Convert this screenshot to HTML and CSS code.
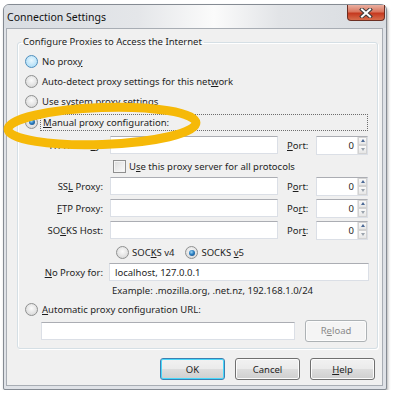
FILE: index.html
```html
<!DOCTYPE html>
<html lang="en">
<head>
  <meta charset="UTF-8" />
  <title>Connection Settings</title>
  <link rel="stylesheet" href="styles.css">
</head>
<body>

  <div class="window">
    <div class="titlebar">
      <span class="title">Connection Settings</span>
      <span class="close">
        <svg width="14" height="10" viewBox="0 0 14 10">
          <path d="M3 1.5 L11 8.5 M11 1.5 L3 8.5" stroke="#3a3a3a" stroke-width="4" stroke-linecap="square"/>
          <path d="M3 1.5 L11 8.5 M11 1.5 L3 8.5" stroke="#fff" stroke-width="2" stroke-linecap="square"/>
        </svg>
      </span>
    </div>

    <div class="client">
      <fieldset class="group">
        <legend>Configure Proxies to Access the Internet</legend>

        <div class="opt row-a"><span class="radio hover"></span><span>No prox<u>y</u></span></div>
        <div class="opt row-a"><span class="radio"></span><span>Auto-detect proxy settings for this net<u>w</u>ork</span></div>
        <div class="opt row-b"><span class="radio"></span><span>Use s<u>y</u>stem proxy settings</span></div>
        <div class="opt row-a"><span class="radio checked"></span><span class="focus"><u>M</u>anual proxy configuration:</span></div>

        <div class="proxy row-http">
          <span class="lbl">HTTP Pro<u>x</u>y:</span>
          <span class="field"></span>
          <span class="plbl"><u>P</u>ort:</span>
          <span class="port"><span class="num">0</span><span class="spin"><i class="up"></i><i class="down"></i></span></span>
        </div>
        <div class="check-row"><span class="check"></span><span>U<u>s</u>e this proxy server for all protocols</span></div>
        <div class="proxy row-ssl">
          <span class="lbl">SS<u>L</u> Proxy:</span>
          <span class="field"></span>
          <span class="plbl">P<u>o</u>rt:</span>
          <span class="port"><span class="num">0</span><span class="spin"><i class="up"></i><i class="down"></i></span></span>
        </div>
        <div class="proxy row-ftp">
          <span class="lbl"><u>F</u>TP Proxy:</span>
          <span class="field"></span>
          <span class="plbl">Po<u>r</u>t:</span>
          <span class="port"><span class="num">0</span><span class="spin"><i class="up"></i><i class="down"></i></span></span>
        </div>
        <div class="proxy row-socks">
          <span class="lbl">SO<u>C</u>KS Host:</span>
          <span class="field"></span>
          <span class="plbl">Por<u>t</u>:</span>
          <span class="port"><span class="num">0</span><span class="spin"><i class="up"></i><i class="down"></i></span></span>
        </div>

        <div class="socks-ver">
          <span class="radio"></span><span class="v4">SOC<u>K</u>S v4</span>
          <span class="radio checked"></span><span>SOCKS <u>v</u>5</span>
        </div>
        <div class="proxy row-noproxy">
          <span class="lbl"><u>N</u>o Proxy for:</span>
          <span class="field wide">localhost, 127.0.0.1</span>
        </div>
        <div class="example">Example: .mozilla.org, .net.nz, 192.168.1.0/24</div>

        <div class="opt row-auto"><span class="radio"></span><span><u>A</u>utomatic proxy configuration URL:</span></div>
        <div class="url-row">
          <span class="field url"></span>
          <span class="btn disabled">R<u>e</u>load</span>
        </div>
      </fieldset>

      <div class="buttons">
        <span class="btn default">OK</span>
        <span class="btn">Cancel</span>
        <span class="btn"><u>H</u>elp</span>
      </div>
    </div>

    <!-- hand-drawn highlight round the manual option, in page coordinates -->
    <svg class="highlight" width="210" height="160" viewBox="0 0 210 160">
      <ellipse cx="102" cy="126" rx="94" ry="18.5" transform="rotate(-2 102 126)" fill="none" stroke="#f6b908" stroke-width="9"/>
    </svg>
  </div>

</body>
</html>
```

FILE: styles.css
```css
* { box-sizing: border-box; }

body {
  margin: 0;
  background: #fff;
  font-family: "Noto Sans", sans-serif;
  font-size: 9.5px;
  color: #1e1e1e;
}

u { text-decoration-thickness: 1px; text-underline-offset: 1px; }

.window {
  position: relative;
  margin: 4px 0 0 3px;
  width: 384px;
  height: 386px;
  border: 1px solid #858b93;
  border-radius: 6px 6px 2px 2px;
  background: #dfe2e7;
  box-shadow: 1px 2px 3px rgba(0, 0, 0, 0.3);
  padding: 0 3px 3px 2px;
  display: flex;
  flex-direction: column;
}

.titlebar {
  height: 23px;
  margin: 0 -3px 0 -2px;
  padding: 0 1px 0 3px;
  display: flex;
  justify-content: space-between;
  border-radius: 5px 5px 0 0;
  background: linear-gradient(to right, #d9dde2 0%, #e4e6e9 35%, #fbfbfb 55%, #e2e4e7 72%, #d8dce1 100%);
}

.title {
  align-self: center;
  font-size: 10.5px;
  color: #111;
}

.close {
  width: 38px;
  height: 16px;
  display: flex;
  align-items: center;
  justify-content: center;
  border: 1px solid #6b2e22;
  border-top: none;
  border-radius: 0 0 4px 4px;
  background: linear-gradient(#eab0a2 0%, #d9765e 45%, #c5391f 55%, #d66d4c 100%);
}

.client {
  flex: 1;
  background: #f0f0f0;
  border: 1px solid #a8adb4;
  display: flex;
  flex-direction: column;
}

.group {
  margin: 5px 5px 0 10px;
  padding: 1px 8px 4px 7px;
  border: 1px solid #d5dfe5;
  border-radius: 3px;
  box-shadow: inset 1px 1px 0 #fff, 1px 1px 0 #fff;
}

.group legend {
  padding: 0 2px;
  margin-left: -4px;
  line-height: 16px;
  font-size: 9.5px;
}

.opt {
  display: flex;
  align-items: center;
  gap: 4px;
  height: 20px;
}

.row-b { height: 21px; }

.radio {
  width: 13px;
  height: 13px;
  flex: none;
  border-radius: 50%;
  border: 1px solid #8f9090;
  background: radial-gradient(circle at 50% 40%, #fbfbfb 0%, #e2e2e2 60%, #cfcfcf 100%);
  display: flex;
  align-items: center;
  justify-content: center;
}

.radio.hover {
  border-color: #4f8fbd;
  background: radial-gradient(circle at 50% 40%, #e9f7fe 0%, #b6e1f8 70%, #9ad2f2 100%);
}

.radio.checked::after {
  content: "";
  width: 6px;
  height: 6px;
  border-radius: 50%;
  background: radial-gradient(circle at 40% 35%, #9fd7f6 0%, #2b7fc1 45%, #143f73 100%);
}

.focus {
  flex: 1;
  margin: 0 1px 0 -2px;
  padding: 1px 2px;
  border: 1px dotted #6d6d6d;
}

.proxy {
  display: flex;
  align-items: center;
}

.row-http { height: 26px; }
.row-ssl { height: 24px; }
.row-ftp { height: 20px; }
.row-socks { height: 24px; }
.row-noproxy { height: 18px; }

.lbl {
  width: 78px;
  text-align: right;
  margin-right: 7px;
}

.field {
  width: 168px;
  height: 18px;
  background: #fff;
  border: 1px solid #dbdfe6;
  border-top-color: #abadb3;
  padding: 0 5px;
  display: flex;
  align-items: center;
}

.field.wide {
  width: 260px;
  margin-left: -1px;
}

.plbl {
  width: 29px;
  margin-left: 9px;
}

.port {
  width: 52px;
  height: 19px;
  display: flex;
  background: #fff;
  border: 1px solid #dbdfe6;
  border-top-color: #abadb3;
}

.num {
  flex: 1;
  text-align: right;
  padding-right: 3px;
  line-height: 17px;
}

.spin {
  width: 10px;
  display: flex;
  flex-direction: column;
  border-left: 1px solid #e5e5e5;
}

.spin i {
  flex: 1;
  display: flex;
  align-items: center;
  justify-content: center;
  border: 1px solid #d2d2d2;
  background: linear-gradient(#fafafa, #e6e6e6);
}

.spin i::after {
  content: "";
  border-left: 2.5px solid transparent;
  border-right: 2.5px solid transparent;
}

.spin .up::after { border-bottom: 3px solid #4c6a96; }
.spin .down::after { border-top: 3px solid #9aa3ad; }

.check-row {
  height: 16px;
  display: flex;
  align-items: center;
  gap: 3px;
  padding-left: 88px;
}

.check {
  width: 13px;
  height: 13px;
  border: 1px solid #8f8f8f;
  background: linear-gradient(135deg, #dcdcdc, #fbfbfb);
  box-shadow: inset 0 0 0 1px #f4f4f4;
}

.socks-ver {
  height: 21px;
  display: flex;
  align-items: center;
  gap: 3px;
  padding-left: 91px;
}

.socks-ver .v4 { margin-right: 8px; }

.example {
  height: 20px;
  line-height: 20px;
  padding-left: 87px;
}

.row-auto { height: 16px; }

.url-row {
  height: 27px;
  display: flex;
  align-items: center;
  gap: 10px;
  padding-left: 16px;
}

.field.url { width: 254px; }

.btn {
  width: 65px;
  height: 22px;
  display: flex;
  align-items: center;
  justify-content: center;
  border: 1px solid #707070;
  border-radius: 3px;
  background: linear-gradient(#f2f2f2 0%, #ebebeb 48%, #dddddd 52%, #cfcfcf 100%);
  box-shadow: inset 0 0 0 1px #fcfcfc;
}

.btn.disabled {
  width: 62px;
  color: #8a8a8a;
  border-color: #adb2b5;
  background: #f4f4f4;
}

.btn.default {
  border-color: #3c7fb1;
  box-shadow: inset 0 0 0 1px #48d8fb;
}

.buttons {
  display: flex;
  justify-content: flex-end;
  gap: 10px;
  margin: 9px 7px 0 0;
}

.highlight {
  position: absolute;
  left: -4px;
  top: -5px;
}
```
